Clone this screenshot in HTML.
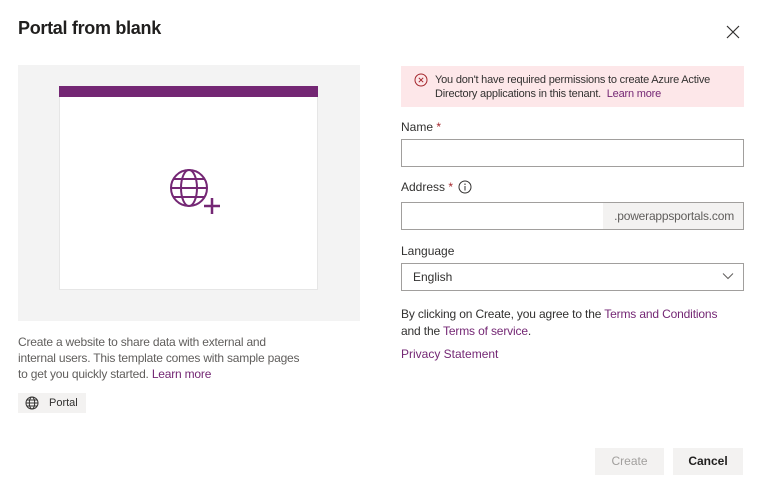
<!DOCTYPE html>
<html><head><meta charset="utf-8"><style>
*{box-sizing:border-box;margin:0;padding:0}
body{width:760px;height:482px;background:#fff;font-family:"Segoe UI","Liberation Sans",sans-serif;color:#323130;position:relative;overflow:hidden}
.a{position:absolute;white-space:nowrap}
h1{position:absolute;left:18px;top:18px;font-size:18px;font-weight:bold;color:#201f1e;letter-spacing:-0.3px}
.lbl{font-size:12px;color:#323130}
.inp{border:1px solid #a19f9d;background:#fff;height:28px;left:401px;width:343px}
a,.lk{color:#742774;text-decoration:none}
</style></head><body>
<h1>Portal from blank</h1>
<svg class="a" style="left:726px;top:25px" width="14" height="14" viewBox="0 0 14 14"><path d="M1 1L13 13M13 1L1 13" stroke="#323130" stroke-width="1.2"/></svg>

<div class="a" style="left:18px;top:65px;width:342px;height:256px;background:#f3f3f3"></div>
<div class="a" style="left:59px;top:86px;width:259px;height:204px;background:#fff;border:1px solid #e6e6e6"></div>
<div class="a" style="left:59px;top:86px;width:259px;height:11px;background:#742774"></div>
<svg class="a" style="left:168px;top:168px" width="54" height="48" viewBox="0 0 54 48">
<g fill="none" stroke="#742774" stroke-width="2"><circle cx="21" cy="20" r="18"/><ellipse cx="21" cy="20" rx="8" ry="18"/><path d="M3 20H39M6 11H36M6 29H36"/></g>
<path d="M44 30V46M36 38H52" stroke="#742774" stroke-width="2.5"/></svg>

<div class="a" style="left:18px;top:334px;font-size:12px;line-height:16px;color:#605e5c;letter-spacing:-0.2px">Create a website to share data with external and<br>internal users. This template comes with sample pages<br>to get you quickly started. <span class="lk">Learn more</span></div>
<div class="a" style="left:18px;top:393px;width:68px;height:20px;background:#f3f2f1"></div>
<svg class="a" style="left:25px;top:396px" width="14" height="14" viewBox="0 0 14 14"><g fill="none" stroke="#323130" stroke-width="1"><circle cx="7" cy="7" r="6"/><ellipse cx="7" cy="7" rx="2.7" ry="6"/><path d="M1 7H13M2 4H12M2 10H12"/></g></svg>
<div class="a" style="left:49px;top:397px;font-size:11px;color:#323130">Portal</div>

<div class="a" style="left:401px;top:66px;width:343px;height:41px;background:#fde7e9"></div>
<svg class="a" style="left:414px;top:73px" width="14" height="14" viewBox="0 0 14 14"><circle cx="7" cy="7" r="6" fill="none" stroke="#a4262c"/><path d="M4.8 4.8L9.2 9.2M9.2 4.8L4.8 9.2" stroke="#a4262c"/></svg>
<div class="a" style="left:435px;top:73px;font-size:11px;line-height:14px;color:#323130;letter-spacing:-0.2px">You don't have required permissions to create Azure Active<br>Directory applications in this tenant.&nbsp; <span class="lk">Learn more</span></div>

<div class="a lbl" style="left:401px;top:120px">Name <span style="color:#a4262c">*</span></div>
<div class="a inp" style="top:139px"></div>
<div class="a lbl" style="left:401px;top:180px">Address <span style="color:#a4262c">*</span></div>
<svg class="a" style="left:458px;top:180px" width="14" height="14" viewBox="0 0 14 14"><circle cx="7" cy="7" r="6" fill="none" stroke="#323130"/><path d="M7 6V10.5" stroke="#323130"/><circle cx="7" cy="4.2" r="0.7" fill="#323130"/></svg>
<div class="a inp" style="top:202px"></div>
<div class="a" style="left:603px;top:203px;width:140px;height:26px;background:#f3f2f1;font-size:12px;color:#605e5c;line-height:26px;text-align:right;padding-right:9px;letter-spacing:-0.2px">.powerappsportals.com</div>
<div class="a lbl" style="left:401px;top:244px">Language</div>
<div class="a inp" style="top:263px;font-size:12px;line-height:26px;padding-left:11px">English</div>
<svg class="a" style="left:722px;top:272px" width="12" height="8" viewBox="0 0 12 8"><path d="M1 1.5L6 6.5L11 1.5" fill="none" stroke="#605e5c"/></svg>

<div class="a" style="left:401px;top:306px;font-size:12px;line-height:17px;color:#323130;letter-spacing:-0.15px">By clicking on Create, you agree to the <span class="lk">Terms and Conditions</span><br>and the <span class="lk">Terms of service</span>.</div>
<div class="a lk" style="left:401px;top:347px;font-size:12px">Privacy Statement</div>

<div class="a" style="left:595px;top:448px;width:69px;height:27px;background:#f3f2f1;color:#a19f9d;font-size:12px;line-height:27px;text-align:center">Create</div>
<div class="a" style="left:673px;top:448px;width:70px;height:27px;background:#f3f2f1;color:#201f1e;font-size:12px;font-weight:bold;line-height:27px;text-align:center">Cancel</div>
</body></html>
